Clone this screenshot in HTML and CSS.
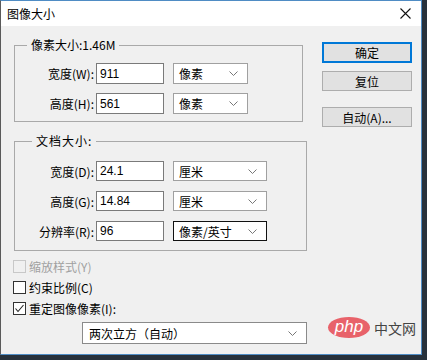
FILE: index.html
```html
<!DOCTYPE html>
<html lang="zh-CN">
<head>
    <meta charset="UTF-8">
    <title>图像大小</title>
    <link rel="stylesheet" href="styles.css">
</head>
<body>
    <div class="window">
        <div class="titlebar">
            <span class="title">图像大小</span>
            <svg class="close" width="11" height="11" viewBox="0 0 11 11"><path d="M0.5 0.5L10.5 10.5M10.5 0.5L0.5 10.5" stroke="#111" stroke-width="1.1" fill="none"/></svg>
        </div>

        <div class="content">
            <div class="main">
                <fieldset class="group pixels">
                    <legend>像素大小:1.46M</legend>
                    <div class="row">
                        <label>宽度(W):</label>
                        <input class="field" type="text" value="911">
                        <div class="dropdown small">像素<svg width="9" height="5" viewBox="0 0 9 5"><path d="M0.5 0.5L4.5 4.5L8.5 0.5" stroke="#777" fill="none"/></svg></div>
                    </div>
                    <div class="row">
                        <label>高度(H):</label>
                        <input class="field" type="text" value="561">
                        <div class="dropdown small">像素<svg width="9" height="5" viewBox="0 0 9 5"><path d="M0.5 0.5L4.5 4.5L8.5 0.5" stroke="#777" fill="none"/></svg></div>
                    </div>
                </fieldset>

                <fieldset class="group doc">
                    <legend class="spaced">文档大小:</legend>
                    <div class="row">
                        <label>宽度(D):</label>
                        <input class="field" type="text" value="24.1">
                        <div class="dropdown">厘米<svg width="9" height="5" viewBox="0 0 9 5"><path d="M0.5 0.5L4.5 4.5L8.5 0.5" stroke="#777" fill="none"/></svg></div>
                    </div>
                    <div class="row">
                        <label>高度(G):</label>
                        <input class="field" type="text" value="14.84">
                        <div class="dropdown">厘米<svg width="9" height="5" viewBox="0 0 9 5"><path d="M0.5 0.5L4.5 4.5L8.5 0.5" stroke="#777" fill="none"/></svg></div>
                    </div>
                    <div class="row">
                        <label>分辨率(R):</label>
                        <input class="field" type="text" value="96">
                        <div class="dropdown focused">像素/英寸<svg width="9" height="5" viewBox="0 0 9 5"><path d="M0.5 0.5L4.5 4.5L8.5 0.5" stroke="#777" fill="none"/></svg></div>
                    </div>
                </fieldset>

                <div class="checks">
                    <div class="check disabled"><span class="box"></span>缩放样式(Y)</div>
                    <div class="check"><span class="box"></span>约束比例(C)</div>
                    <div class="check"><span class="box"><svg width="11" height="11" viewBox="0 0 11 11"><path d="M1.5 5.5L4 8.5L9.5 2" stroke="#222" stroke-width="1.1" fill="none"/></svg></span>重定图像像素(I):</div>
                </div>

                <div class="dropdown wide">两次立方（自动）<svg width="9" height="5" viewBox="0 0 9 5"><path d="M0.5 0.5L4.5 4.5L8.5 0.5" stroke="#777" fill="none"/></svg></div>
            </div>

            <div class="side">
                <button class="btn default">确定</button>
                <button class="btn">复位</button>
                <button class="btn auto">自动(A)...</button>
            </div>
        </div>

        <div class="watermark">
            <span class="php">php</span>
            <span class="cn">中文网</span>
        </div>
    </div>
</body>
</html>
```

FILE: styles.css
```css
body {
    margin: 0;
    background-color: #27313b;
    font-family: "Noto Sans CJK SC", "Liberation Sans", sans-serif;
    font-size: 12px;
    color: #000;
}
.window {
    position: relative;
    width: 420px;
    height: 353px;
    border: 1px solid #4f8cc4;
    border-left-color: #5a5a5a;
    background-color: #f0f0f0;
}
.titlebar {
    height: 25px;
    background-color: #fff;
    display: flex;
    align-items: center;
    justify-content: space-between;
    padding: 0 6px 0 6px;
}
.title {
    font-size: 12px;
    line-height: 14px;
}
.close {
    margin-right: 4px;
}
.content {
    display: flex;
}
.main {
    width: 293px;
    padding: 12px 0 0 13px;
}
.group {
    margin: 0;
    padding: 0 0 7px 0;
    border: 1px solid #a9a9a9;
}
.group legend {
    margin-left: 12px;
    padding: 0 4px;
    line-height: 14px;
}
.group legend.spaced {
    margin-left: 17px;
    letter-spacing: 1px;
}
.pixels {
    width: 287px;
    padding-top: 11px;
}
.doc {
    width: 291px;
    margin-top: 12px;
    padding-top: 13px;
    padding-bottom: 9px;
}
.row {
    display: flex;
    align-items: center;
    height: 21px;
    margin-bottom: 9px;
}
.doc .row {
    height: 20px;
    margin-bottom: 10px;
}
.row:last-child {
    margin-bottom: 0;
}
.row label {
    width: 79px;
    text-align: right;
    padding-right: 2px;
}
.field {
    box-sizing: border-box;
    width: 68px;
    height: 100%;
    margin: 0 9px 0 0;
    padding: 0 0 0 3px;
    border: 1px solid #7a7a7a;
    background: #fff;
    font-family: "Liberation Sans", sans-serif;
    font-size: 12px;
    color: #000;
}
.dropdown {
    box-sizing: border-box;
    display: flex;
    align-items: center;
    justify-content: space-between;
    width: 94px;
    height: 100%;
    padding: 0 9px 0 5px;
    border: 1px solid #a0a0a0;
    background: #fff;
}
.dropdown.small {
    width: 75px;
}
.dropdown.focused {
    border-color: #111;
}
.dropdown.wide {
    width: 225px;
    height: 22px;
    margin: 3px 0 0 68px;
    border-color: #8a8a8a;
    padding-left: 6px;
}
.checks {
    margin-top: 5px;
}
.check {
    display: flex;
    align-items: center;
    height: 21px;
}
.box {
    box-sizing: border-box;
    width: 13px;
    height: 13px;
    margin: 0 3px 0 -1px;
    border: 1px solid #333;
    background: #fff;
    display: flex;
    align-items: center;
    justify-content: center;
}
.check.disabled {
    color: #a0a0a0;
}
.check.disabled .box {
    border-color: #c8c8c8;
    background: #f0f0f0;
}
.side {
    display: flex;
    flex-direction: column;
    margin-left: 15px;
    padding-top: 16px;
}
.btn {
    box-sizing: border-box;
    width: 90px;
    height: 20px;
    margin: 0 0 8px 0;
    padding: 0;
    border: 1px solid #adadad;
    background-color: #e1e1e1;
    font-family: "Noto Sans CJK SC", "Liberation Sans", sans-serif;
    font-size: 12px;
    color: #000;
}
.btn.default {
    height: 21px;
    border: 2px solid #0078d7;
}
.btn.auto {
    margin-top: 8px;
}
.watermark {
    position: absolute;
    left: 327px;
    top: 316px;
    display: flex;
    align-items: center;
}
.php {
    width: 42px;
    height: 21px;
    border-radius: 50%;
    background-color: #e8626a;
    color: #fff;
    font-family: "Liberation Sans", sans-serif;
    font-style: italic;
    font-size: 17px;
    line-height: 19px;
    text-align: center;
}
.cn {
    margin-left: 4px;
    font-size: 14px;
    color: #444;
}
```
